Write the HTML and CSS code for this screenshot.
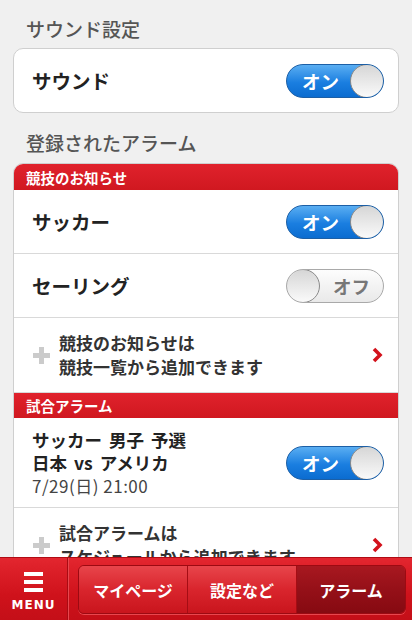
FILE: index.html
```html
<!DOCTYPE html>
<html>
<head>
  <meta charset="UTF-8">
  <title>アラーム設定</title>
  <link rel="stylesheet" href="styles.css">
</head>
<body>
  <div class="page">
    <h2 class="section-title first">サウンド設定</h2>
    <div class="card">
      <div class="row">
        <span class="label">サウンド</span>
        <span class="toggle on"><span class="toggle-text">オン</span><span class="knob"></span></span>
      </div>
    </div>

    <h2 class="section-title">登録されたアラーム</h2>
    <div class="card">
      <div class="card-head top">競技のお知らせ</div>
      <div class="row">
        <span class="label">サッカー</span>
        <span class="toggle on"><span class="toggle-text">オン</span><span class="knob"></span></span>
      </div>
      <div class="row">
        <span class="label">セーリング</span>
        <span class="toggle off"><span class="knob"></span><span class="toggle-text">オフ</span></span>
      </div>
      <div class="row add">
        <span class="plus"></span>
        <span class="add-text">競技のお知らせは<br>競技一覧から追加できます</span>
        <svg class="chevron" width="12" height="16" viewBox="0 0 12 16"><polyline points="3,2 9,8 3,14" fill="none" stroke="#d3121c" stroke-width="3.6"/></svg>
      </div>
      <div class="card-head">試合アラーム</div>
      <div class="row match">
        <div class="match-info">
          <div class="match-title">サッカー 男子 予選<br>日本 vs アメリカ</div>
          <div class="match-date">7/29(日) 21:00</div>
        </div>
        <span class="toggle on"><span class="toggle-text">オン</span><span class="knob"></span></span>
      </div>
      <div class="row add">
        <span class="plus"></span>
        <span class="add-text">試合アラームは<br>スケジュールから追加できます</span>
        <svg class="chevron" width="12" height="16" viewBox="0 0 12 16"><polyline points="3,2 9,8 3,14" fill="none" stroke="#d3121c" stroke-width="3.6"/></svg>
      </div>
    </div>
  </div>

  <nav class="tabbar">
    <div class="menu-btn">
      <span class="burger"><i></i><i></i><i></i></span>
      <span class="menu-text">MENU</span>
    </div>
    <div class="tabs">
      <a class="tab">マイページ</a>
      <a class="tab">設定など</a>
      <a class="tab active">アラーム</a>
    </div>
  </nav>
</body>
</html>
```

FILE: styles.css
```css
body {
  margin: 0;
  padding: 0;
  background-color: #f0f0f0;
  font-family: "Noto Sans CJK JP", "Noto Sans", sans-serif;
  color: #222;
  height: 620px;
  overflow: hidden;
}

.page {
  padding: 0 13px;
}

.section-title {
  margin: 0;
  padding: 19px 13px 9px;
  font-size: 19px;
  line-height: 22px;
  font-weight: 500;
  color: #555;
}

.section-title.first {
  padding-top: 18px;
  padding-bottom: 8px;
}

.card {
  background-color: #fff;
  border: 1px solid #cfcfcf;
  border-radius: 10px;
  overflow: hidden;
}

.card-head {
  background: linear-gradient(#e0222c, #d01820);
  color: #fff;
  font-size: 14.5px;
  font-weight: bold;
  height: 25px;
  line-height: 25px;
  padding-left: 12px;
}

.card-head.top {
  height: 26px;
  line-height: 27px;
}

.row {
  display: flex;
  align-items: center;
  justify-content: space-between;
  height: 63px;
  padding: 0 14px 0 18px;
  border-bottom: 1px solid #d9d9d9;
}

.row:last-child {
  border-bottom: none;
}

.label {
  font-size: 19.5px;
  font-weight: bold;
}

.toggle {
  display: flex;
  align-items: center;
  box-sizing: border-box;
  width: 98px;
  height: 34px;
  border-radius: 17px;
  overflow: hidden;
}

.toggle.on {
  background: linear-gradient(#5aaef2, #1a7ee0 55%, #0b6cd0);
  border: 1px solid #1c5fa6;
  justify-content: space-between;
}

.toggle.off {
  background: linear-gradient(#fdfdfd, #e9e9e9);
  border: 1px solid #a9a9a9;
  justify-content: space-between;
}

.toggle-text {
  font-size: 18.5px;
  font-weight: bold;
  line-height: 32px;
}

.toggle.on .toggle-text {
  color: #fff;
  padding-left: 15px;
}

.toggle.off .toggle-text {
  color: #777;
  padding-right: 13px;
}

.knob {
  box-sizing: border-box;
  width: 34px;
  height: 34px;
  border-radius: 50%;
  background: linear-gradient(#d6d6d6, #fafafa);
  border: 1px solid #8a8a8a;
  margin: -1px;
}

.row.add {
  height: 74px;
  padding-left: 19px;
  justify-content: flex-start;
}

.plus {
  position: relative;
  width: 17px;
  height: 17px;
  margin-right: 9px;
  flex: none;
}

.plus::before,
.plus::after {
  content: "";
  position: absolute;
  background-color: #cbcbcb;
}

.plus::before {
  left: 0;
  top: 6px;
  width: 17px;
  height: 5px;
}

.plus::after {
  left: 6px;
  top: 0;
  width: 5px;
  height: 17px;
}

.add-text {
  font-size: 17px;
  line-height: 24px;
  font-weight: bold;
  color: #333;
  flex: 1;
}

.chevron {
  flex: none;
  margin-right: 1px;
}

.row.match {
  height: 89px;
}

.match-title {
  font-size: 17.5px;
  line-height: 23px;
  font-weight: bold;
  word-spacing: 3px;
}

.match-date {
  font-size: 17px;
  line-height: 23px;
  color: #444;
  letter-spacing: 0.5px;
}

.tabbar {
  position: fixed;
  left: 0;
  right: 0;
  bottom: 0;
  height: 63px;
  display: flex;
  background: linear-gradient(#e3262f, #cf121b 60%, #c40f18);
  border-top: 1px solid #b00c14;
  box-sizing: border-box;
}

.menu-btn {
  width: 67px;
  display: flex;
  flex-direction: column;
  align-items: center;
  border-right: 1px solid #a80c13;
  box-shadow: 1px 0 0 #e8474e;
}

.burger {
  display: flex;
  flex-direction: column;
  gap: 4px;
  margin-top: 14px;
}

.burger i {
  display: block;
  width: 19px;
  height: 4px;
  background-color: #fff;
}

.menu-text {
  color: #fff;
  font-family: "DejaVu Sans", sans-serif;
  font-size: 12px;
  font-weight: bold;
  letter-spacing: 1px;
  margin-top: 6px;
}

.tabs {
  flex: 1;
  display: flex;
  margin: 7px 6px 6px 10px;
  border: 1px solid #9c0a12;
  border-radius: 6px;
  overflow: hidden;
  box-shadow: 0 1px 0 #e8474e;
}

.tab {
  flex: 1;
  display: flex;
  align-items: center;
  justify-content: center;
  color: #fff;
  font-size: 16px;
  font-weight: bold;
  background: linear-gradient(#e8454b, #d9252d 50%, #c9151d);
  border-right: 1px solid #a50d14;
}

.tab:last-child {
  border-right: none;
}

.tab.active {
  background: linear-gradient(#a81820, #951018 50%, #860a11);
}
```
